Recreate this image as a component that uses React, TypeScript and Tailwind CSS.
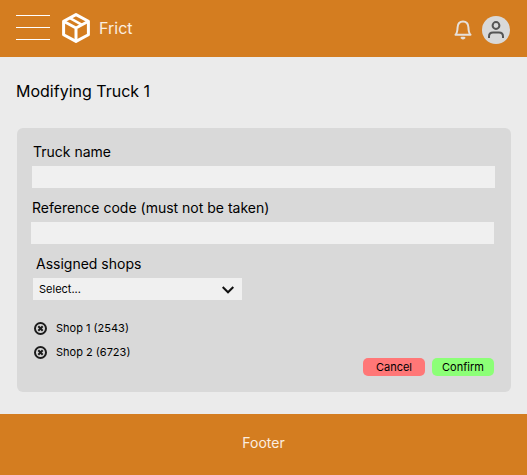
import React from "react";

const shops = [
  { name: "Shop 1", code: 2543 },
  { name: "Shop 2", code: 6723 },
];

function BoxLogo() {
  return (
    <svg aria-hidden="true" className="h-[30px] w-7" viewBox="0 0 28 30" fill="none" stroke="white" strokeWidth="3" strokeLinejoin="round">
      <path d="M14 1.6 26.4 8.3V21.7L14 28.4 1.6 21.7V8.3Z" />
      <path d="M2 8.5 14 15 26 8.5M14 15V28" />
      <path d="M8 5.2 20 11.8" strokeWidth="2.6" />
    </svg>
  );
}

function BellIcon() {
  return (
    <svg aria-hidden="true" className="h-5 w-[18px]" viewBox="0 0 18 20" fill="none" stroke="#e6e0da" strokeWidth="2" strokeLinecap="round" strokeLinejoin="round">
      <path d="M1.5 14.8H16.5C14.8 13.2 14.6 11.6 14.4 7.2C14.2 3.7 12 1.5 9 1.5S3.8 3.7 3.6 7.2C3.4 11.6 3.2 13.2 1.5 14.8Z" />
      <path d="M7.6 17.8Q9 19 10.4 17.8Z" fill="#e6e0da" />
    </svg>
  );
}

function UserIcon() {
  return (
    <svg aria-hidden="true" className="size-[18px]" viewBox="0 0 18 18" fill="none" stroke="#555555" strokeWidth="2">
      <circle cx="9" cy="4.5" r="3.4" />
      <path d="M2 17V15.5Q2 11.5 6 11.5H12Q16 11.5 16 15.5V17" />
    </svg>
  );
}

function RemoveIcon() {
  return (
    <svg aria-hidden="true" className="size-[13px]" viewBox="0 0 13 13" fill="none" stroke="#1c1c1c" strokeWidth="2">
      <circle cx="6.5" cy="6.5" r="5.5" />
      <path d="M4.3 4.3 8.7 8.7M8.7 4.3 4.3 8.7" />
    </svg>
  );
}

export default function App() {
  return (
    <div className="flex min-h-screen flex-col bg-[#ebebeb] font-['Inter',sans-serif] text-black">
      <header className="flex h-[57px] items-center bg-[#d47d20] px-4 pb-0.5">
        <button type="button" aria-label="Open menu" className="flex w-[34px] flex-col gap-[11px]">
          <span className="h-px w-full bg-white" />
          <span className="h-px w-full bg-white" />
          <span className="h-px w-full bg-white" />
        </button>
        <a href="#" className="ml-3 flex items-center gap-[9px] text-base text-[#fbeee0]">
          <BoxLogo />
          Frict
        </a>
        <div className="ml-auto flex items-center gap-[10px] pt-1">
          <button type="button" aria-label="Notifications">
            <BellIcon />
          </button>
          <button type="button" aria-label="Account" className="mr-px flex size-7 items-center justify-center rounded-full bg-[#d9d9d9]">
            <UserIcon />
          </button>
        </div>
      </header>

      <main className="flex-1 px-4 pt-[22px] pb-[22px]">
        <h1 className="text-base">Modifying Truck 1</h1>

        <form className="mt-[25px] ml-px rounded-md bg-[#d9d9d9] px-4 pt-[14px] pb-4" onSubmit={(e) => e.preventDefault()}>
          <div className="-ml-px">
            <label htmlFor="truck-name" className="block pl-px text-sm">Truck name</label>
            <input id="truck-name" type="text" className="mt-1 block h-[22px] w-full bg-[#f0f0f0] px-1.5 text-xs" />
          </div>
          <div className="mt-[10px] -ml-0.5 mr-px">
            <label htmlFor="reference-code" className="block pl-px text-sm">Reference code (must not be taken)</label>
            <input id="reference-code" type="text" className="mt-1 block h-[22px] w-full bg-[#f0f0f0] px-1.5 text-xs" />
          </div>
          <div className="mt-[10px]">
            <label htmlFor="assigned-shops" className="block pl-[3px] text-sm">Assigned shops</label>
            <div className="relative mt-1 w-[209px]">
              <select id="assigned-shops" className="block h-[22px] w-full appearance-none bg-[#f0f0f0] px-1.5 text-[11px]">
                <option>Select...</option>
              </select>
              <svg aria-hidden="true" className="pointer-events-none absolute top-2 right-2 h-2 w-3" viewBox="0 0 12 8" fill="none" stroke="#111111" strokeWidth="2">
                <path d="M.7 1 6 6.3 11.3 1" />
              </svg>
            </div>
          </div>

          <div className="mt-4 flex items-end justify-between">
            <ul className="pb-3 text-[11px]">
              {shops.map((shop) => (
                <li key={shop.code} className="flex h-6 items-center gap-[9px] pl-px">
                  <button type="button" aria-label={`Remove ${shop.name}`}>
                    <RemoveIcon />
                  </button>
                  {shop.name} ({shop.code})
                </li>
              ))}
            </ul>
            <div className="mr-px flex gap-[7px] text-[11px]">
              <button type="button" className="h-[18px] w-[62px] rounded-[5px] bg-[#ff7777]">Cancel</button>
              <button type="submit" className="h-[18px] w-[62px] rounded-[5px] bg-[#8cff77]">Confirm</button>
            </div>
          </div>
        </form>
      </main>

      <footer className="flex h-[61px] items-center justify-center bg-[#d47d20] px-4 pb-1 text-sm text-[#fbeee0]">Footer</footer>
    </div>
  );
}
